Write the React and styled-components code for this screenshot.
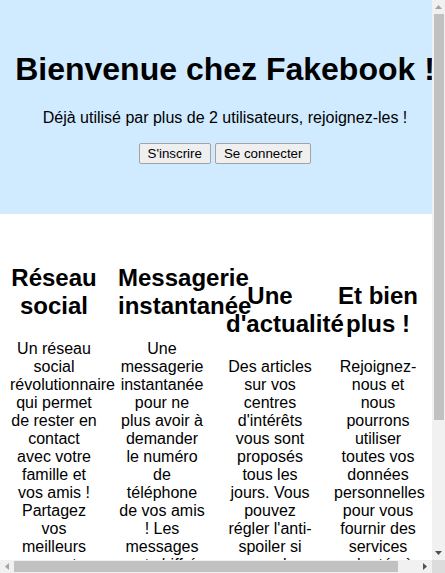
import React from 'react'
import styled, { createGlobalStyle } from 'styled-components'

const GlobalStyle = createGlobalStyle`
    html, body {
        margin: 0;
        overflow: hidden;
        font-family: 'Liberation Sans', Arial, sans-serif;
        color: #000;
    }
`;

const Window = styled.div`
    display: grid;
    grid-template-columns: 432px 13px;
    grid-template-rows: 560px 13px;
    width: 445px;
    height: 573px;
`;

const Content = styled.main`
    min-width: 0;
    overflow: hidden;
    background-color: #fff;
`;

/* fake browser scrollbars, the screenshot was taken with them */
const ScrollBar = styled.div`
    display: flex;
    flex-direction: ${(p) => (p.$vertical ? 'column' : 'row')};
    background-color: #f1f1f1;
`;

const ArrowButton = styled.div`
    flex: 0 0 14px;
    display: flex;
    align-items: center;
    justify-content: center;

    svg {
        display: block;
    }
`;

const Track = styled.div`
    flex: 1;
    display: flex;
    flex-direction: ${(p) => (p.$vertical ? 'column' : 'row')};
`;

const Thumb = styled.div`
    background-color: #c1c1c1;
    ${(p) => (p.$vertical
        ? `height: ${p.$size}px; margin: 0 1px 0 2px;`
        : `width: ${p.$size}px; margin: 1px 0;`)}
`;

const Corner = styled.div`
    background-color: #dcdcdc;
`;

const Banner = styled.header`
    width: 100%;
    padding: 30px 9px 50px;
    background-color: #d0ebff;
    text-align: center;
`;

const Title = styled.h1`
    font-size: 32px;
    margin: 21px 0;
    white-space: nowrap;
`;

const Tagline = styled.p`
    font-size: 16px;
    margin: 16px 0;
`;

const Actions = styled.div`
    display: flex;
    justify-content: center;
    gap: 4px;
    margin-top: 2px;
`;

const Button = styled.button`
    font-family: 'Liberation Sans', Arial, sans-serif;
    font-size: 13.33px;
    color: #000;
    background-color: #efefef;
    border: 1px solid #a3a3a3;
    border-radius: 2px;
    padding: 2px 8px;
    line-height: 15px;
    cursor: pointer;
`;

const Features = styled.section`
    display: flex;
    align-items: center;
    padding: 30px 0 10px;
`;

const Feature = styled.div`
    flex: 1;
    min-width: 0;
    margin: 0 10px;
    text-align: center;

    h2 {
        font-size: 24px;
        margin: 20px 0;
    }

    p {
        font-size: 16px;
        margin: 16px 0;
    }
`;

const Arrow = ({ dir, color }) => {
    const points = {
        up: '0,4 3.5,0 7,4',
        down: '0,0 7,0 3.5,4',
        left: '4,0 4,7 0,3.5',
        right: '0,0 4,3.5 0,7'
    };
    const vertical = dir === 'up' || dir === 'down';
    return (
        <svg width={vertical ? 7 : 4} height={vertical ? 4 : 7}>
            <polygon points={points[dir]} fill={color} />
        </svg>
    );
};

const features = [
    {
        title: 'Réseau social',
        text: "Un réseau social révolutionnaire qui permet de rester en contact avec votre famille et vos amis ! Partagez vos meilleurs moments, vos photos et vidéos."
    },
    {
        title: 'Messagerie instantanée',
        text: "Une messagerie instantanée pour ne plus avoir à demander le numéro de téléphone de vos amis ! Les messages sont chiffrés de bout en bout."
    },
    {
        title: "Une d'actualité",
        text: "Des articles sur vos centres d'intérêts vous sont proposés tous les jours. Vous pouvez régler l'anti-spoiler si vous le souhaitez."
    },
    {
        title: 'Et bien plus !',
        text: "Rejoignez-nous et nous pourrons utiliser toutes vos données personnelles pour vous fournir des services adaptés à vos envies."
    }
];

const App = () => {
    return (
        <Window>
            <GlobalStyle />
            <Content>
                <Banner>
                    <Title>Bienvenue chez Fakebook !</Title>
                    <Tagline>Déjà utilisé par plus de 2 utilisateurs, rejoignez-les !</Tagline>
                    <Actions>
                        <Button>S'inscrire</Button>
                        <Button>Se connecter</Button>
                    </Actions>
                </Banner>
                <Features>
                    {features.map((f) => (
                        <Feature key={f.title}>
                            <h2>{f.title}</h2>
                            <p>{f.text}</p>
                        </Feature>
                    ))}
                </Features>
            </Content>
            <ScrollBar $vertical>
                <ArrowButton><Arrow dir="up" color="#a3a3a3" /></ArrowButton>
                <Track $vertical>
                    <Thumb $vertical $size={406} />
                </Track>
                <ArrowButton><Arrow dir="down" color="#505050" /></ArrowButton>
            </ScrollBar>
            <ScrollBar>
                <ArrowButton><Arrow dir="left" color="#a3a3a3" /></ArrowButton>
                <Track>
                    <Thumb $size={384} />
                </Track>
                <ArrowButton><Arrow dir="right" color="#505050" /></ArrowButton>
            </ScrollBar>
            <Corner />
        </Window>
    )
}

export default App
